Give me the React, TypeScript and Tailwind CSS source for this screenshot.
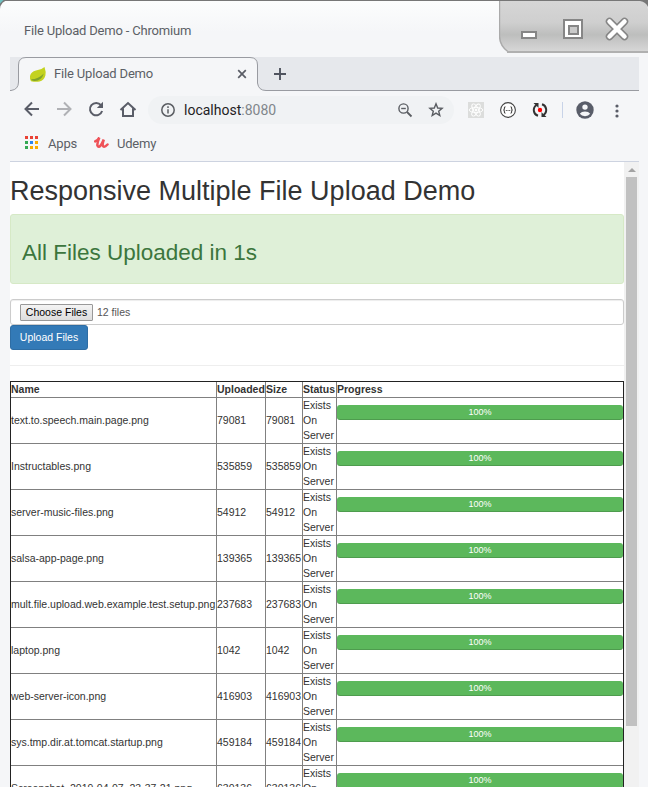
import React from "react";

const files: [string, string][] = [
  ["text.to.speech.main.page.png", "79081"],
  ["Instructables.png", "535859"],
  ["server-music-files.png", "54912"],
  ["salsa-app-page.png", "139365"],
  ["mult.file.upload.web.example.test.setup.png", "237683"],
  ["laptop.png", "1042"],
  ["web-server-icon.png", "416903"],
  ["sys.tmp.dir.at.tomcat.startup.png", "459184"],
  ["Screenshot_2019-04-07_23-37-21.png", "630136"],
];

const cols = "grid grid-cols-[206px_49px_37px_34px_286px]";
const cell = "border-r border-[#808080] last:border-r-0";

function WindowButtons() {
  return (
    <svg width="149" height="53" viewBox="0 0 149 53" className="block shrink-0">
      <defs>
        <linearGradient id="metal" x1="0" y1="0" x2="0" y2="1">
          <stop offset="0" stopColor="#d6d6d6" />
          <stop offset="0.42" stopColor="#cfcfcf" />
          <stop offset="0.66" stopColor="#bdbebd" />
          <stop offset="1" stopColor="#d8d8d8" />
        </linearGradient>
      </defs>
      <path d="M0 1H143Q149 3 149 9V52H10Q0 48 0 36Z" fill="url(#metal)" />
      <path d="M0.5 1V36Q1 46 9 51.7" fill="none" stroke="#aaa" strokeWidth="1.4" />
      <path d="M8 52H149" stroke="#b0b0b0" strokeWidth="2" />
      <path d="M141 0H149V7Q147 2 141 1Z" fill="#777" />
      <rect x="23" y="32" width="14" height="6" fill="#fff" stroke="#868686" strokeWidth="2" />
      <rect x="65" y="20" width="18" height="18" fill="#fff" stroke="#868686" strokeWidth="2" />
      <rect x="70" y="26" width="9" height="8" fill="#cacaca" stroke="#868686" strokeWidth="2" />
      <g strokeLinecap="round">
        <path d="M110.500 21.500L125.500 36.500M125.500 21.500L110.500 36.500" stroke="#868686" strokeWidth="7.500" />
        <path d="M110.500 21.500L125.500 36.500M125.500 21.500L110.500 36.500" stroke="#fff" strokeWidth="4.500" />
      </g>
    </svg>
  );
}

function Leaf() {
  return (
    <svg width="18" height="18" viewBox="0 0 18 18" className="block">
      <path d="M15.500 2Q17.300 7 16.400 10.500Q15 15.500 10.500 16.500Q7 17.200 2 16.300Q0.600 13.500 1 11Q2 6.800 7 5.600Q12.500 5 15.500 2Z" fill="#c3d21f" />
      <path d="M2 14.300Q9.500 14.200 14.800 8.500Q12.500 16 5.500 16Q2.800 16 2 14.300Z" fill="#7fa32a" />
    </svg>
  );
}

function TabStrip() {
  return (
    <div className="relative mx-[10px] mr-[9px] flex h-[34px] items-center bg-[#e6e8ec]">
      <svg width="629" height="34" viewBox="0 0 629 34" className="absolute inset-0">
        <path d="M0 33.500H1Q8.500 32.500 8.500 25V8Q8.500 0.500 16 0.500H240Q247.500 0.500 247.500 8V26Q248.500 33.500 256 33.500H629V34H0Z" fill="#f5f6f8" />
        <path d="M247.500 1V26Q248.500 33 256 33H629V0H242Q247.500 1 247.500 8Z" fill="#e6e8ec" />
        <path d="M0 33.500H1Q8.500 32.500 8.500 25V8Q8.500 0.500 16 0.500H240Q247.500 0.500 247.500 8V26Q248.500 33.500 256 33.500H629" fill="none" stroke="#999ba1" />
      </svg>
      <div className="relative flex w-[248px] items-center pl-[19px]">
        <Leaf />
        <span className="ml-[7px] flex-1 text-[13px] tracking-[-0.170px] text-[#5c5f66]">File Upload Demo</span>
        <svg width="10" height="10" viewBox="0 0 10 10" className="mr-[11px]">
          <path d="M1.200 1.200L8.800 8.800M8.800 1.200L1.200 8.800" stroke="#5a5d66" strokeWidth="1.700" />
        </svg>
      </div>
      <svg width="12" height="12" viewBox="0 0 12 12" className="relative ml-4">
        <path d="M6 0V12M0 6H12" stroke="#50545f" strokeWidth="1.900" />
      </svg>
    </div>
  );
}

function Toolbar() {
  return (
    <div className="flex h-[38px] items-center pl-[22px] pr-[19px] text-[#5a5d68]">
      <svg width="124" height="20" viewBox="0 0 124 20" fill="none" stroke="currentColor" strokeWidth="2" className="block shrink-0">
        <path d="M17 9H4M10 2.500L3.500 9L10 15.500" />
        <path d="M35 9H48M42 2.500L48.500 9L42 15.500" stroke="#b0b1b5" />
        <path d="M79 5.200A6.200 6.200 0 1 0 80.100 11" />
        <path d="M81 1.800V8H74.800Z" fill="currentColor" stroke="none" />
        <path d="M98.500 10L106 3L113.500 10M101 8.500V16H111V8.500" />
      </svg>
      <div className="ml-[2px] flex h-7 w-[306px] shrink-0 items-center rounded-full bg-[#f0f2f4] pl-[13px] pr-[9px]">
        <svg width="14" height="14" viewBox="0 0 14 14" fill="none" stroke="#5a5d62" strokeWidth="1.500">
          <circle cx="7" cy="7" r="6.200" />
          <path d="M7 6.200V10.500M7 3.300V4.900" />
        </svg>
        <span className="ml-[9px] flex-1 text-[14px] text-[#1f2124]">
          localhost<span className="text-[#80868b]">:8080</span>
        </span>
        <svg width="48" height="16" viewBox="0 0 48 16" fill="none" stroke="#5a5d62" strokeWidth="1.400">
          <circle cx="6.500" cy="6.500" r="4.600" />
          <path d="M10 10L14.500 14.500" strokeWidth="1.800" />
          <path d="M4.200 6.500H8.800" />
          <path d="M39 1.800L40.700 6L45.100 6.300L41.700 9.200L42.800 13.600L39 11.200L35.200 13.600L36.300 9.200L32.900 6.300L37.300 6Z" />
        </svg>
      </div>
      <div className="ml-[14px] flex items-center">
        <svg width="16" height="16" viewBox="0 0 16 16" fill="none" stroke="#fff" strokeWidth="0.900">
          <rect width="16" height="16" fill="#dcdddc" stroke="none" />
          <ellipse cx="8" cy="8" rx="6.800" ry="2.600" />
          <ellipse cx="8" cy="8" rx="6.800" ry="2.600" transform="rotate(60 8 8)" />
          <ellipse cx="8" cy="8" rx="6.800" ry="2.600" transform="rotate(120 8 8)" />
          <circle cx="8" cy="8" r="1" fill="#fff" />
        </svg>
        <svg width="16" height="16" viewBox="0 0 16 16" fill="none" stroke="#444" strokeWidth="1.100" className="ml-4">
          <circle cx="8" cy="8" r="7.400" fill="#fff" />
          <path d="M5.500 4.800Q4.300 4.800 4.400 6.500Q4.400 8 3.300 8Q4.400 8 4.400 9.500Q4.300 11.200 5.500 11.200M10.500 4.800Q11.700 4.800 11.600 6.500Q11.600 8 12.700 8Q11.600 8 11.600 9.500Q11.700 11.200 10.500 11.200" />
          <path d="M5.800 8.500H10.300" strokeDasharray="1 0.700" />
        </svg>
        <svg width="16" height="16" viewBox="0 0 16 16" fill="none" stroke="#333" strokeWidth="2" className="ml-4">
          <path d="M6 13.800A6 6 0 0 1 4.600 3M10 2.200A6 6 0 0 1 11.400 13" />
          <path d="M1.500 1H6.500V6L5.200 4.600L3 2.600ZM14.500 15H9.500V10L10.800 11.400L13 13.400Z" fill="#333" stroke="none" />
          <circle cx="8" cy="8" r="2.200" fill="#f00" stroke="none" />
        </svg>
        <div className="ml-[14px] h-4 w-px bg-[#c8d3e8]" />
        <svg width="18" height="18" viewBox="0 0 18 18" className="ml-[13px]">
          <circle cx="9" cy="9" r="8.700" fill="#595d69" />
          <circle cx="9" cy="6.100" r="2.700" fill="#f5f6f8" />
          <path d="M3.800 12.800Q5.500 10.500 9 10.500Q12.500 10.500 14.200 12.800Q12.400 15.200 9 15.200Q5.600 15.200 3.800 12.800Z" fill="#f5f6f8" />
        </svg>
        <svg width="4" height="14" viewBox="0 0 4 14" fill="currentColor" className="ml-[21px] mt-px">
          <circle cx="2" cy="2" r="1.600" />
          <circle cx="2" cy="7" r="1.600" />
          <circle cx="2" cy="12" r="1.600" />
        </svg>
      </div>
    </div>
  );
}

function Bookmarks() {
  const dots = ["#e94235", "#e94235", "#e94235", "#34a853", "#2a84f0", "#f9ab00", "#34a853", "#f9ab00", "#f9ab00"];
  const fills = dots.map((c, i) => <rect key={i} x={(i % 3) * 5} y={Math.floor(i / 3) * 5} width="3" height="3" fill={c} />);
  return (
    <div className="mx-[10px] mr-[9px] flex h-[33px] items-start border-b border-[#cdd3e0] pl-[15px] text-[13px] leading-5 text-[#5c5f66]">
      <svg width="13" height="13" viewBox="0 0 13 13" className="mt-[7px]">{fills}</svg>
      <span className="ml-[10px] mt-[5px] tracking-[-0.200px]">Apps</span>
      <svg width="15" height="13" viewBox="0 0 15 13" className="ml-[17px] mt-[7px]" fill="none" stroke="#ef5258" strokeWidth="2.500" strokeLinecap="round">
        <path d="M1.200 5.400Q4 4 5.300 1.500Q3 7 3.400 9.500Q4.700 12.500 7.300 8.500L9.800 3.500Q8 8.800 9.200 10.300Q10.700 11.500 13.500 8.500" />
      </svg>
      <span className="ml-[8px] mt-[5px] tracking-[-0.200px]">Udemy</span>
    </div>
  );
}

function FileTable() {
  return (
    <div className="mt-[15px] w-[614px] border-x border-t border-[#222] text-[10.5px] leading-[15px]">
      <div className={`${cols} h-4 border-b border-[#808080] font-bold`}>
        <div className={cell}>Name</div>
        <div className={cell}>Uploaded</div>
        <div className={cell}>Size</div>
        <div className={cell}>Status</div>
        <div className={cell}>Progress</div>
      </div>
      {files.map(([name, size]) => (
        <div key={name} className={`${cols} h-[46px] border-b border-[#808080]`}>
          <div className={`${cell} flex items-center whitespace-nowrap`}>{name}</div>
          <div className={`${cell} flex items-center`}>{size}</div>
          <div className={`${cell} flex items-center`}>{size}</div>
          <div className={cell}>Exists On Server</div>
          <div className={`${cell} pt-[7px]`}>
            <div className="h-[15px] rounded-[3px] bg-[#5cb85c] text-center text-[9px] text-white shadow-[inset_0_-1px_0_rgba(0,0,0,0.15)]">100%</div>
          </div>
        </div>
      ))}
    </div>
  );
}

export default function App() {
  return (
    <div className="h-[787px] w-[648px] overflow-hidden bg-[linear-gradient(135deg,#6fc3c3_0_2px,#777_3px)] font-['Roboto',sans-serif]">
      <div className="flex h-full flex-col rounded-tl-[9px] bg-[linear-gradient(to_bottom,#777_0_1px,#fcfdfd_1px,#f5f6f8_32px)]">
        <header className="flex h-[57px] shrink-0 items-start justify-between pl-6">
          <h1 className="pt-[21px] text-[13px] leading-5 tracking-[-0.190px] text-[#5c5f66]">File Upload Demo - Chromium</h1>
          <WindowButtons />
        </header>
        <TabStrip />
        <Toolbar />
        <Bookmarks />
        <div className="mx-[10px] mr-[9px] flex min-h-0 flex-1 bg-white font-['Liberation_Sans',Arial,sans-serif] text-[#333]">
          <main className="w-[614px] overflow-hidden">
            <h1 className="mt-[14px] text-[27px] leading-[30px]">Responsive Multiple File Upload Demo</h1>
            <div className="mt-2 h-[70px] rounded-[3px] border border-[#d6e9c6] bg-[#dff0d8] pl-[11px] pt-[25px] text-[22.5px] leading-[25px] text-[#3c763d]">
              All Files Uploaded in 1s
            </div>
            <div className="mt-[15px] flex h-[26px] items-start rounded-[3px] border border-[#ccc] pl-[9px] pt-1 text-[10.5px] leading-[15px] text-[#555] shadow-[inset_0_1px_1px_rgba(0,0,0,0.075)]">
              <button className="h-[17px] w-[73px] whitespace-nowrap rounded-[1px] border border-[#999] bg-gradient-to-b from-[#f4f4f4] to-[#dddddd] text-[10.5px] leading-[15px] text-black">Choose Files</button>
              <span className="ml-1 mt-px">12 files</span>
            </div>
            <button className="block h-[25px] w-[78px] rounded-[3px] border border-[#2e6da4] bg-[#337ab7] text-[10.5px] leading-[15px] text-white">Upload Files</button>
            <div className="mt-[15px] h-px bg-[#eee]" />
            <FileTable />
          </main>
          <div className="flex w-[15px] flex-col items-center bg-[#f1f1f1]">
            <div className="flex h-[15px] items-center justify-center">
              <div className="border-x-[4px] border-b-[4px] border-x-transparent border-b-[#a3a3a3]" />
            </div>
            <div className="h-[549px] w-[11px] bg-[#c1c1c1]" />
          </div>
        </div>
      </div>
    </div>
  );
}
